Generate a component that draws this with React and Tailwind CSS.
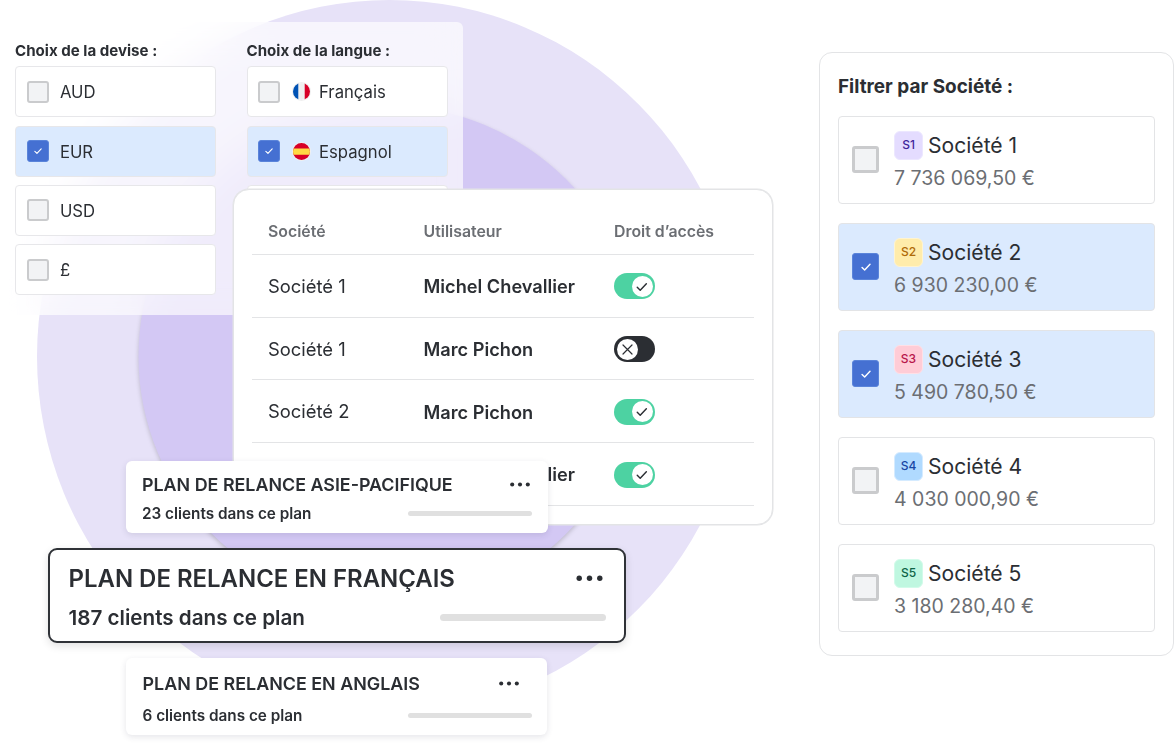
import clsx from "clsx";

const currencies = [
  { label: "AUD" },
  { label: "EUR", checked: true },
  { label: "USD" },
  { label: "£" },
];

const languages = [
  { label: "Français", flag: "fr" },
  { label: "Espagnol", flag: "es", checked: true },
  { label: "" },
];

const rights = [
  { company: "Société 1", user: "Michel Chevallier", on: true },
  { company: "Société 1", user: "Marc Pichon", on: false },
  { company: "Société 2", user: "Marc Pichon", on: true },
  { company: "", user: "Michel Chevallier", on: true },
];

const companies = [
  { tag: "S1", name: "Société 1", amount: "7 736 069,50 €", tagClass: "bg-[#e4dcff] border-[#ece7ff] text-[#40259b]" },
  { tag: "S2", name: "Société 2", amount: "6 930 230,00 €", tagClass: "bg-[#ffecab] border-[#fff4d0] text-[#b06a08]", checked: true },
  { tag: "S3", name: "Société 3", amount: "5 490 780,50 €", tagClass: "bg-[#ffccd6] border-[#ffe0e6] text-[#b8164c]", checked: true },
  { tag: "S4", name: "Société 4", amount: "4 030 000,90 €", tagClass: "bg-[#b0daff] border-[#d5ebff] text-[#1847a5]" },
  { tag: "S5", name: "Société 5", amount: "3 180 280,40 €", tagClass: "bg-[#bff7e0] border-[#d2fbea] text-[#0e6446]" },
];

function Check({ className, width = 1.7 }) {
  return (
    <svg className={className} viewBox="0 0 12 12" fill="none" stroke="currentColor" strokeWidth={width} strokeLinecap="round" strokeLinejoin="round">
      <path d="M1.3 6.6 4.4 9.6 10.8 2.8" />
    </svg>
  );
}

function Checkbox({ checked, large }) {
  return (
    <span
      className={clsx(
        "flex shrink-0 items-center justify-center rounded-[3px]",
        large ? "mb-px size-[27px]" : "size-[22px]",
        checked ? "border border-[#5a84da] bg-[#4570d2] text-white" : "border-[#cacbcd] bg-[#f2f3f5]",
        !checked && (large ? "border-3" : "border-2")
      )}
    >
      {checked && <Check className={large ? "size-[10px]" : "size-[8px]"} />}
    </span>
  );
}

function Flag({ code }) {
  return (
    <svg className="mr-[9px] ml-[1.6px] size-[17px] shrink-0 rounded-full ring-1 ring-[#f0f0f0]" viewBox="0 0 18 18">
      {code === "fr" ? (
        <>
          <path fill="#f0f0f0" d="M0 0h18v18H0z" />
          <path fill="#0052b4" d="M0 0h5.6v18H0z" />
          <path fill="#d80027" d="M12.4 0H18v18h-5.6z" />
        </>
      ) : (
        <>
          <path fill="#d80027" d="M0 0h18v18H0z" />
          <path fill="#ffda44" d="M0 5.8h18v6.6H0z" />
        </>
      )}
    </svg>
  );
}

function OptionList({ title, options }) {
  return (
    <div className="w-[201px]">
      <h3 className="mb-[5.4px] pt-px text-[15.1px] leading-5 font-bold whitespace-nowrap">{title}</h3>
      <ul className="space-y-[8.25px]">
        {options.map((option, i) => (
          <li
            key={i}
            className={clsx(
              "flex h-[51px] items-center rounded-[4px] border border-[#e7e7ea] pl-[10.6px]",
              option.checked ? "bg-[#dbeafe]" : "bg-white"
            )}
          >
            <Checkbox checked={option.checked} />
            <span className="w-[11.3px]" />
            {option.flag && <Flag code={option.flag} />}
            <span className="pt-[2px] text-[16.7px]">{option.label}</span>
          </li>
        ))}
      </ul>
    </div>
  );
}

function Toggle({ on }) {
  return (
    <span
      className={clsx(
        "flex h-[26px] w-[41px] items-center rounded-full px-[2.5px]",
        on ? "justify-end bg-[#4dd2a2]" : "justify-start bg-[#2b2e33]"
      )}
    >
      <span className="flex size-[21px] items-center justify-center rounded-full bg-white">
        {on ? (
          <Check className="size-[11.5px]" width={1.5} />
        ) : (
          <svg className="size-[11px]" viewBox="0 0 11 11" stroke="currentColor" strokeWidth="1.2" strokeLinecap="round">
            <path d="M1 1l9 9M10 1l-9 9" />
          </svg>
        )}
      </span>
    </span>
  );
}

function Dots({ className }) {
  return (
    <svg className={className} viewBox="0 0 20 5" fill="currentColor">
      <circle cx="2.2" cy="2.5" r="2.05" />
      <circle cx="10" cy="2.5" r="2.05" />
      <circle cx="17.8" cy="2.5" r="2.05" />
    </svg>
  );
}

export default function App() {
  return (
    <div className="relative h-[750px] w-[1174px] overflow-hidden bg-white font-['Inter',sans-serif] text-[#2b2e33]">
      {/* Background circles */}
      <svg className="absolute inset-0" width="1174" height="750">
        <ellipse cx="389.5" cy="356.5" rx="352.5" ry="356.5" fill="#e7e2f8" />
        <circle cx="389" cy="356.5" r="250.5" fill="#d3c8f4" className="drop-shadow-[0_2px_2px_rgba(0,0,0,0.18)]" />
      </svg>

      {/* Currency and language */}
      <section className="absolute top-[22px] left-0 flex h-[293px] w-[463px] gap-[30.5px] overflow-hidden rounded-[6px] bg-white/65 pt-[18px] pl-[15px] backdrop-blur-[20px]">
        <OptionList title="Choix de la devise :" options={currencies} />
        <OptionList title="Choix de la langue :" options={languages} />
      </section>

      {/* Access rights */}
      <section className="absolute top-[189px] left-[233px] h-[336px] w-[540px] rounded-[16px] border-[1.5px] border-[#e3e4e6] bg-white px-[18px] pt-[19px] shadow-[0_0_0_0.5px_#e3e4e6]">
        <div className="grid h-[46px] grid-cols-[171.5px_190.5px_1fr] items-center border-b border-[#e3e4e6] text-[15.85px] font-semibold text-[#6b6e73]">
          <span className="pl-4">Société</span>
          <span>Utilisateur</span>
          <span>Droit d’accès</span>
        </div>
        {rights.map((right, i) => (
          <div key={i} className="grid h-[62.7px] grid-cols-[171.5px_190.5px_1fr] items-center border-b border-[#e3e4e6] pt-[1.2px] text-[18.4px]">
            <span className="pt-[0.9px] pl-4">{right.company}</span>
            <span className="pt-[0.9px] text-[18.2px] font-semibold">{right.user}</span>
            <Toggle on={right.on} />
          </div>
        ))}
      </section>

      {/* Reminder plans */}
      <article className="absolute top-[461px] left-[126px] h-[72px] w-[422px] rounded-[6px] bg-white pt-[11px] pr-4 pl-4 shadow-[0_2px_6px_rgba(40,40,70,0.12)]">
        <div className="flex items-center justify-between pr-[2.5px]">
          <h2 className="text-[17.87px] leading-[26px] font-semibold">PLAN DE RELANCE ASIE-PACIFIQUE</h2>
          <Dots className="mb-[2px] h-[5px] w-5" />
        </div>
        <div className="mt-[6px] flex items-center justify-between">
          <p className="text-[15.3px] leading-5 font-semibold">23 clients dans ce plan</p>
          <span className="mb-px h-[5px] w-[124px] rounded-full bg-[#e0e0e0]" />
        </div>
      </article>

      <article className="absolute top-[548px] left-[48px] h-[95px] w-[578px] rounded-[9px] border-2 border-[#2f3237] bg-white pt-[11px] pr-[18.5px] pl-[18.5px] shadow-[0_3px_8px_rgba(0,0,0,0.12)]">
        <div className="flex items-center justify-between pr-[3px]">
          <h2 className="text-[23.95px] leading-9 font-semibold">PLAN DE RELANCE EN FRANÇAIS</h2>
          <Dots className="mb-[2px] h-[6.6px] w-[27px]" />
        </div>
        <div className="mt-[6px] flex items-center justify-between">
          <p className="text-[20.65px] leading-[30px] font-semibold">187 clients dans ce plan</p>
          <span className="mb-[2px] h-[7px] w-[166px] rounded-full bg-[#e0e0e0]" />
        </div>
      </article>

      <article className="absolute top-[658px] left-[126px] h-[77px] w-[421px] rounded-[6px] bg-white pt-[13px] pr-[15px] pl-[16.5px] shadow-[0_2px_6px_rgba(40,40,70,0.12)]">
        <div className="flex items-center justify-between pr-[13px]">
          <h2 className="text-[17.9px] leading-[26px] font-semibold">PLAN DE RELANCE EN ANGLAIS</h2>
          <Dots className="mb-px h-[5px] w-5" />
        </div>
        <div className="mt-[9px] flex items-center justify-between">
          <p className="text-[15.3px] leading-5 font-semibold">6 clients dans ce plan</p>
          <span className="mb-[2px] h-[5px] w-[124px] rounded-full bg-[#e0e0e0]" />
        </div>
      </article>

      {/* Company filter */}
      <aside className="absolute top-[52px] left-[819px] h-[604px] w-[355px] rounded-[13px] border border-[#e3e4e6] bg-white px-[18px] pt-[19px]">
        <h2 className="mb-[14px] text-[18.95px] leading-[30px] font-bold">Filtrer par Société :</h2>
        <ul className="space-y-[19px]">
          {companies.map((company) => (
            <li
              key={company.tag}
              className={clsx(
                "flex h-[88px] items-center rounded-[4px] border border-[#e3e4e6] pl-[13px]",
                company.checked ? "bg-[#dbeafe]" : "bg-white"
              )}
            >
              <Checkbox checked={company.checked} large />
              <div className="ml-[15px] pt-[2px]">
                <div className="flex items-center gap-[5px]">
                  <span className={clsx("flex size-[29px] items-center justify-center rounded-[6px] border text-[12px] font-medium", company.tagClass)}>
                    {company.tag}
                  </span>
                  <span className="pt-px text-[21.1px] leading-[30px]">{company.name}</span>
                </div>
                <p className="mt-[2px] text-[19.5px] leading-[30px] text-[#6b6e73]">{company.amount}</p>
              </div>
            </li>
          ))}
        </ul>
      </aside>
    </div>
  );
}
